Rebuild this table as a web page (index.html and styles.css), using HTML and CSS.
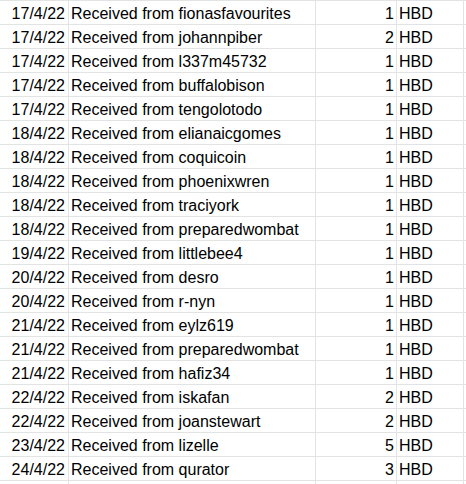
FILE: index.html
```html
<!DOCTYPE html>
<html>
<head>
<meta charset="utf-8">
<link rel="stylesheet" href="styles.css">
</head>
<body>
<div class="sheet">
  <div class="row"><div class="c date">17/4/22</div><div class="c desc">Received from fionasfavourites</div><div class="c num">1</div><div class="c cur">HBD</div></div>
  <div class="row"><div class="c date">17/4/22</div><div class="c desc">Received from johannpiber</div><div class="c num">2</div><div class="c cur">HBD</div></div>
  <div class="row"><div class="c date">17/4/22</div><div class="c desc">Received from l337m45732</div><div class="c num">1</div><div class="c cur">HBD</div></div>
  <div class="row"><div class="c date">17/4/22</div><div class="c desc">Received from buffalobison</div><div class="c num">1</div><div class="c cur">HBD</div></div>
  <div class="row"><div class="c date">17/4/22</div><div class="c desc">Received from tengolotodo</div><div class="c num">1</div><div class="c cur">HBD</div></div>
  <div class="row"><div class="c date">18/4/22</div><div class="c desc">Received from elianaicgomes</div><div class="c num">1</div><div class="c cur">HBD</div></div>
  <div class="row"><div class="c date">18/4/22</div><div class="c desc">Received from coquicoin</div><div class="c num">1</div><div class="c cur">HBD</div></div>
  <div class="row"><div class="c date">18/4/22</div><div class="c desc">Received from phoenixwren</div><div class="c num">1</div><div class="c cur">HBD</div></div>
  <div class="row"><div class="c date">18/4/22</div><div class="c desc">Received from traciyork</div><div class="c num">1</div><div class="c cur">HBD</div></div>
  <div class="row"><div class="c date">18/4/22</div><div class="c desc">Received from preparedwombat</div><div class="c num">1</div><div class="c cur">HBD</div></div>
  <div class="row"><div class="c date">19/4/22</div><div class="c desc">Received from littlebee4</div><div class="c num">1</div><div class="c cur">HBD</div></div>
  <div class="row"><div class="c date">20/4/22</div><div class="c desc">Received from desro</div><div class="c num">1</div><div class="c cur">HBD</div></div>
  <div class="row"><div class="c date">20/4/22</div><div class="c desc">Received from r-nyn</div><div class="c num">1</div><div class="c cur">HBD</div></div>
  <div class="row"><div class="c date">21/4/22</div><div class="c desc">Received from eylz619</div><div class="c num">1</div><div class="c cur">HBD</div></div>
  <div class="row"><div class="c date">21/4/22</div><div class="c desc">Received from preparedwombat</div><div class="c num">1</div><div class="c cur">HBD</div></div>
  <div class="row"><div class="c date">21/4/22</div><div class="c desc">Received from hafiz34</div><div class="c num">1</div><div class="c cur">HBD</div></div>
  <div class="row"><div class="c date">22/4/22</div><div class="c desc">Received from iskafan</div><div class="c num">2</div><div class="c cur">HBD</div></div>
  <div class="row"><div class="c date">22/4/22</div><div class="c desc">Received from joanstewart</div><div class="c num">2</div><div class="c cur">HBD</div></div>
  <div class="row"><div class="c date">23/4/22</div><div class="c desc">Received from lizelle</div><div class="c num">5</div><div class="c cur">HBD</div></div>
  <div class="row"><div class="c date">24/4/22</div><div class="c desc">Received from qurator</div><div class="c num">3</div><div class="c cur">HBD</div></div>
  <div class="row"><div class="c date"></div><div class="c desc"></div><div class="c num"></div><div class="c cur"></div></div>
</div>
</body>
</html>
```
FILE: styles.css
```css
html, body {
  margin: 0;
  padding: 0;
  background: #ffffff;
  overflow: hidden;
}
.sheet {
  font-family: "Liberation Sans", Arial, sans-serif;
  font-size: 16px;
  color: #000000;
  display: flex;
  flex-direction: column;
}
.row {
  display: flex;
  height: 24px;
  box-sizing: border-box;
  border-top: 1px solid #e2e3e3;
  flex: none;
}
.c {
  box-sizing: border-box;
  border-right: 1px solid #e2e3e3;
  padding: 2px 3px 0 3px;
  line-height: 21px;
  white-space: nowrap;
  overflow: hidden;
  flex: none;
}
.date { width: 69px; text-align: right; }
.desc { width: 247px; text-align: left; padding-left: 2px; }
.num { width: 81px; text-align: right; padding-right: 2px; }
.cur { width: 67px; text-align: left; padding-left: 2px; }
```
